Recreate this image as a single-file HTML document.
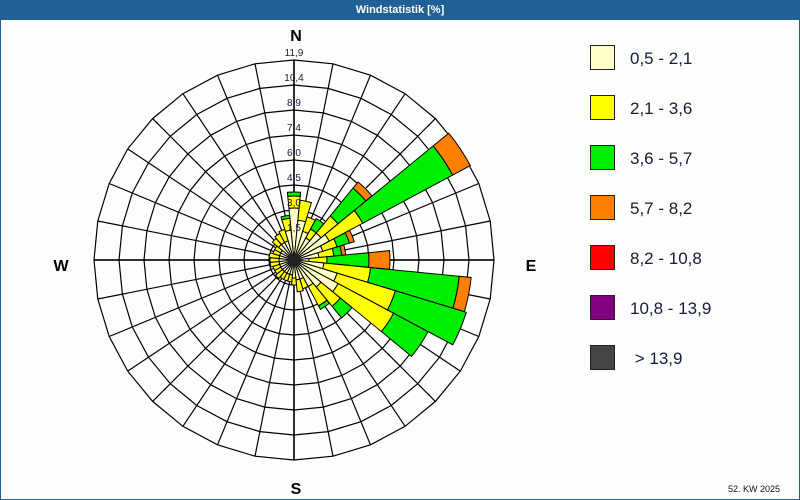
<!DOCTYPE html>
<html><head><meta charset="utf-8"><style>
html,body{margin:0;padding:0;}
body{width:800px;height:500px;overflow:hidden;background:#fcfefc;font-family:"Liberation Sans",sans-serif;}
#frame{position:absolute;left:0;top:0;width:798px;height:498px;border:1px solid #1f6096;}
#title{position:absolute;left:0;top:0;width:800px;height:20px;background:#1f6096;color:#fff;font-size:11px;font-weight:bold;text-align:center;line-height:20px;}
.lg{position:absolute;left:590px;width:23px;height:23px;border:1px solid #222;}
.lt{position:absolute;left:630px;font-size:17px;color:#1a1a3a;}
</style></head><body>
<div id="frame"></div>
<div id="title">Windstatistik [%]</div>
<svg id="s" width="800" height="500" style="position:absolute;left:0;top:0"></svg>
<div class="lg" style="top:45px;background:#ffffc8"></div><div class="lt" style="top:49px">0,5 - 2,1</div>
<div class="lg" style="top:95px;background:#ffff00"></div><div class="lt" style="top:99px">2,1 - 3,6</div>
<div class="lg" style="top:145px;background:#00ee00"></div><div class="lt" style="top:149px">3,6 - 5,7</div>
<div class="lg" style="top:195px;background:#ff8000"></div><div class="lt" style="top:199px">5,7 - 8,2</div>
<div class="lg" style="top:245px;background:#ff0000"></div><div class="lt" style="top:249px">8,2 - 10,8</div>
<div class="lg" style="top:295px;background:#800080"></div><div class="lt" style="top:299px">10,8 - 13,9</div>
<div class="lg" style="top:345px;background:#444"></div><div class="lt" style="top:349px">&nbsp;&gt; 13,9</div>
<div style="position:absolute;left:728px;top:484px;font-size:9px;color:#111">52. KW 2025</div>
<script>
var cx=294,cy=260,s=document.getElementById('s'),h='';
function P(a,r){a=a*Math.PI/180;return (cx+r*Math.sin(a)).toFixed(1)+','+(cy-r*Math.cos(a)).toFixed(1);}
var rings=[25,50,75,100,125,150,175,200];
rings.forEach(function(r){var pts=[];for(var i=0;i<32;i++)pts.push(P(i*11.25,r));
h+='<polygon points="'+pts.join(' ')+'" fill="none" stroke="#000" stroke-width="1.2"/>';});
for(var i=0;i<32;i++){h+='<line x1="'+cx+'" y1="'+cy+'" x2="'+P(i*11.25,200).split(',')[0]+'" y2="'+P(i*11.25,200).split(',')[1]+'" stroke="#000" stroke-width="1.2"/>';}
h+='<line x1="94" y1="260" x2="494" y2="260" stroke="#000" stroke-width="1.5"/><line x1="294" y1="60" x2="294" y2="460" stroke="#000" stroke-width="1.5"/>';
var cols=['#ffffc8','#ffff00','#00ee00','#ff8000'];
var d={0:[52,64,68],1:[40,60],2:[30,45],3:[25,35,47],4:[35,57,93,101],5:[40,78,180,200],6:[30,45,58,63],7:[25,40,48,52],8:[15,33,75,96],9:[30,77,166,178],10:[45,106,180],11:[50,113,152],12:[35,60,75],13:[30,52,56],14:[20,30],15:[20,32],16:[18,25],17:[15,22],18:[15,22],19:[15,22],20:[15,24],21:[15,22],22:[15,22],23:[15,24],24:[15,24],25:[15,25],26:[15,22],27:[15,22],28:[20,28],29:[20,30],30:[20,32],31:[30,42,45]};
function wedge(a0,a1,r0,r1,c){
return '<path d="M'+P(a0,r0)+' L'+P(a0,r1)+' A'+r1+','+r1+' 0 0 1 '+P(a1,r1)+' L'+P(a1,r0)+' A'+r0+','+r0+' 0 0 0 '+P(a0,r0)+'Z" fill="'+c+'" stroke="#000" stroke-width="1"/>';}
for(var k in d){var c=k*11.25,v=d[k],prev=3;for(var j=0;j<v.length;j++){h+=wedge(c-5.6,c+5.6,prev,v[j],cols[j]);prev=v[j];}}
h+='<circle cx="294" cy="260" r="6" fill="#222"/>';
var lab=[['11,9',52],['10,4',77],['8,9',102],['7,4',127],['6,0',152],['4,5',177],['3,0',202],['1,5',227]];
lab.forEach(function(l){h+='<text x="294" y="'+(l[1]+4)+'" font-size="10" text-anchor="middle" fill="#1a1a3a" font-family="Liberation Sans,sans-serif">'+l[0]+'</text>';});
var f='font-family="Liberation Sans,sans-serif" font-size="16" font-weight="bold" text-anchor="middle" fill="#000"';
h+='<text x="296" y="41" '+f+'>N</text><text x="296" y="494" '+f+'>S</text><text x="61" y="271" '+f+'>W</text><text x="531" y="271" '+f+'>E</text>';
s.innerHTML=h;
</script>
</body></html>
